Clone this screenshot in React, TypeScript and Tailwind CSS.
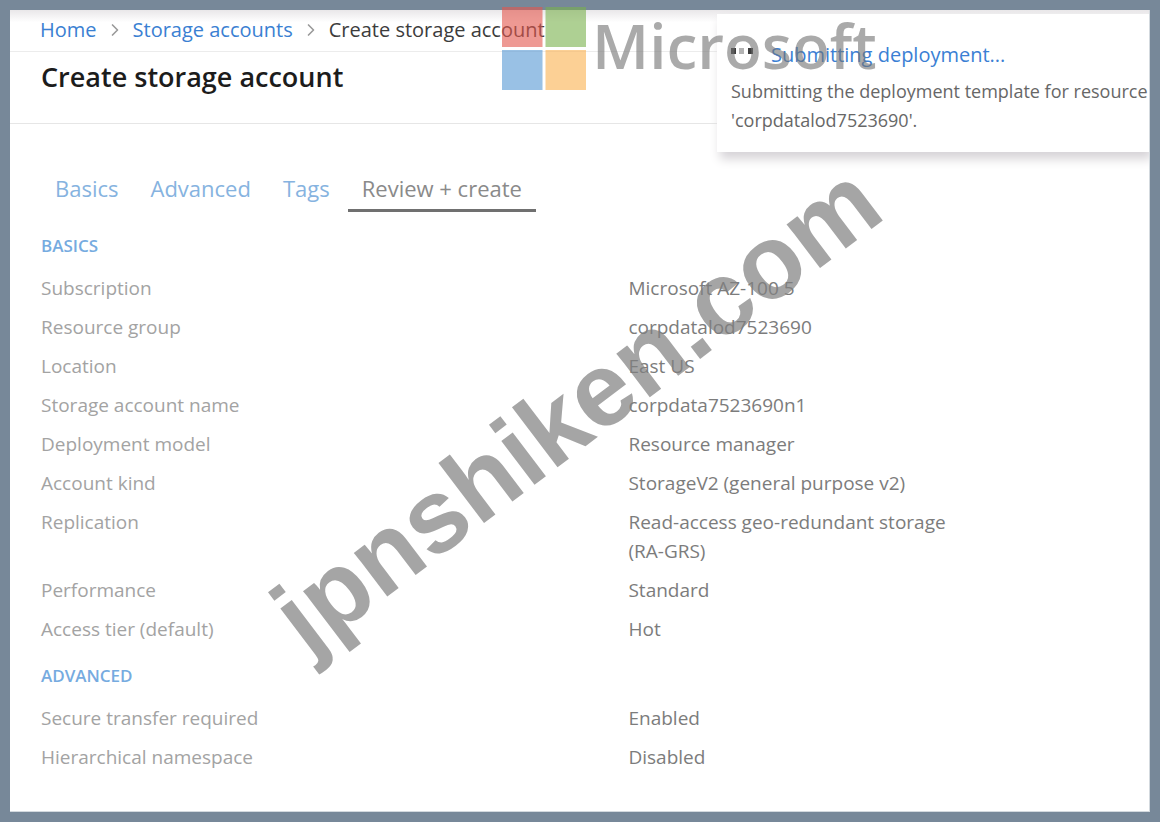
import { useState } from 'react';
import { ChevronRight } from 'lucide-react';

type Row = { label: string; value: string };

const tabs = ['Basics', 'Advanced', 'Tags', 'Review + create'];

const basics: Row[] = [
	{ label: 'Subscription', value: 'Microsoft AZ-100 5' },
	{ label: 'Resource group', value: 'corpdatalod7523690' },
	{ label: 'Location', value: 'East US' },
	{ label: 'Storage account name', value: 'corpdata7523690n1' },
	{ label: 'Deployment model', value: 'Resource manager' },
	{ label: 'Account kind', value: 'StorageV2 (general purpose v2)' },
	{ label: 'Replication', value: 'Read-access geo-redundant storage (RA-GRS)' },
	{ label: 'Performance', value: 'Standard' },
	{ label: 'Access tier (default)', value: 'Hot' },
];

const advanced: Row[] = [
	{ label: 'Secure transfer required', value: 'Enabled' },
	{ label: 'Hierarchical namespace', value: 'Disabled' },
];

function Breadcrumb() {
	return (
		<nav
			aria-label="Breadcrumb"
			className="flex h-[42px] items-center gap-2 border-[#ececec] border-b bg-linear-to-b from-[#e9e7e9] to-white to-30% px-[30px] pb-0.5 text-xl text-[#3c3c3c]"
		>
			<a href="#home" className="text-[#3a80d2]">
				Home
			</a>
			<ChevronRight className="size-5 text-[#9a9a9a]" strokeWidth={2} />
			<a href="#storage-accounts" className="text-[#3a80d2]">
				Storage accounts
			</a>
			<ChevronRight className="size-5 text-[#9a9a9a]" strokeWidth={2} />
			<span aria-current="page">Create storage account</span>
		</nav>
	);
}

function Section({ title, rows }: { title: string; rows: Row[] }) {
	return (
		<section className="pt-[17px]">
			<h2 className="font-semibold text-[#76abe0] text-[17px] leading-[29px]">{title}</h2>
			<dl className="flex flex-col gap-2.5 pt-3.5 text-[19px] leading-[29px]">
				{rows.map((row) => (
					<div key={row.label} className="grid grid-cols-[6fr_5fr]">
						<dt className="text-[#a3a3a3]">{row.label}</dt>
						<dd className="max-w-[340px] text-[#7c7c7c]">{row.value}</dd>
					</div>
				))}
			</dl>
		</section>
	);
}

function Toast() {
	return (
		<div
			role="status"
			className="absolute top-1 right-0 h-[138px] w-[432px] bg-white px-3.5 pt-[26px] shadow-[3px_7px_10px_#d6d3d7]"
		>
			<div className="flex items-start gap-[18px]">
				<svg width="22" height="6" viewBox="0 0 22 6" aria-hidden="true" className="mt-2">
					<rect x="0" y="0" width="5" height="6" fill="#3d3d3d" />
					<rect x="8" y="0" width="5" height="6" fill="#b3b3b3" />
					<rect x="17" y="0" width="5" height="6" fill="#3d3d3d" />
				</svg>
				<a href="#deployment" className="text-[#3b7fd4] text-xl leading-[29px]">
					Submitting deployment...
				</a>
			</div>
			<p className="whitespace-nowrap pt-2 text-[#676767] text-lg leading-[29px]">
				Submitting the deployment template for resource group
				<br />
				'corpdatalod7523690'.
			</p>
		</div>
	);
}

function Brand() {
	return (
		<div className="pointer-events-none absolute top-[7px] left-[502px] flex gap-1.5 opacity-60">
			<svg width="84" height="83" viewBox="0 0 84 83" aria-hidden="true">
				<rect x="0" y="0" width="40.500" height="40" fill="#e4574d" />
				<rect x="43.500" y="0" width="40.500" height="40" fill="#7ab14d" />
				<rect x="0" y="43" width="40.500" height="40" fill="#5798d4" />
				<rect x="43.500" y="43" width="40.500" height="40" fill="#fbb150" />
			</svg>
			<span className="font-semibold text-[#737373] text-[62px] leading-[76px]">Microsoft</span>
		</div>
	);
}

export default function App() {
	const [active, setActive] = useState('Review + create');

	return (
		<div className="relative flex min-h-screen flex-col overflow-hidden bg-[#778899] p-2.5 font-['Open_Sans','Noto_Sans',sans-serif]">
			<main className="relative grow overflow-hidden border-[#d3d9de] border-r border-b bg-white">
				<Breadcrumb />
				<header className="h-[72px] border-[#e6e6e6] border-b px-[31px] pt-[7px]">
					<h1 className="font-semibold text-[#1c1c1c] text-[27px] leading-9">Create storage account</h1>
				</header>

				<div className="px-[31px] pt-12 pb-8">
					<div role="tablist" className="mb-0.5 flex gap-1 text-[22px]">
						{tabs.map((tab) => (
							<button
								key={tab}
								type="button"
								role="tab"
								aria-selected={tab === active}
								onClick={() => {
									setActive(tab);
								}}
								className={
									tab === active
										? 'h-10 border-[#707070] border-b-3 px-3.5 pb-2 text-[#8a8a8a] leading-8'
										: 'h-10 border-transparent border-b-3 px-3.5 pb-2 text-[#86b3e0] leading-8'
								}
							>
								{tab}
							</button>
						))}
					</div>
					<Section title="BASICS" rows={basics} />
					<Section title="ADVANCED" rows={advanced} />
				</div>

				<Toast />
			</main>

			<Brand />
			<div className="pointer-events-none absolute inset-0 flex items-center justify-center pr-2 pb-1.5">
				<span className="-rotate-[37.2deg] whitespace-nowrap font-['Liberation_Sans',sans-serif] font-bold text-[#808080] text-[104px] leading-none opacity-70">
					jpnshiken.com
				</span>
			</div>
		</div>
	);
}
